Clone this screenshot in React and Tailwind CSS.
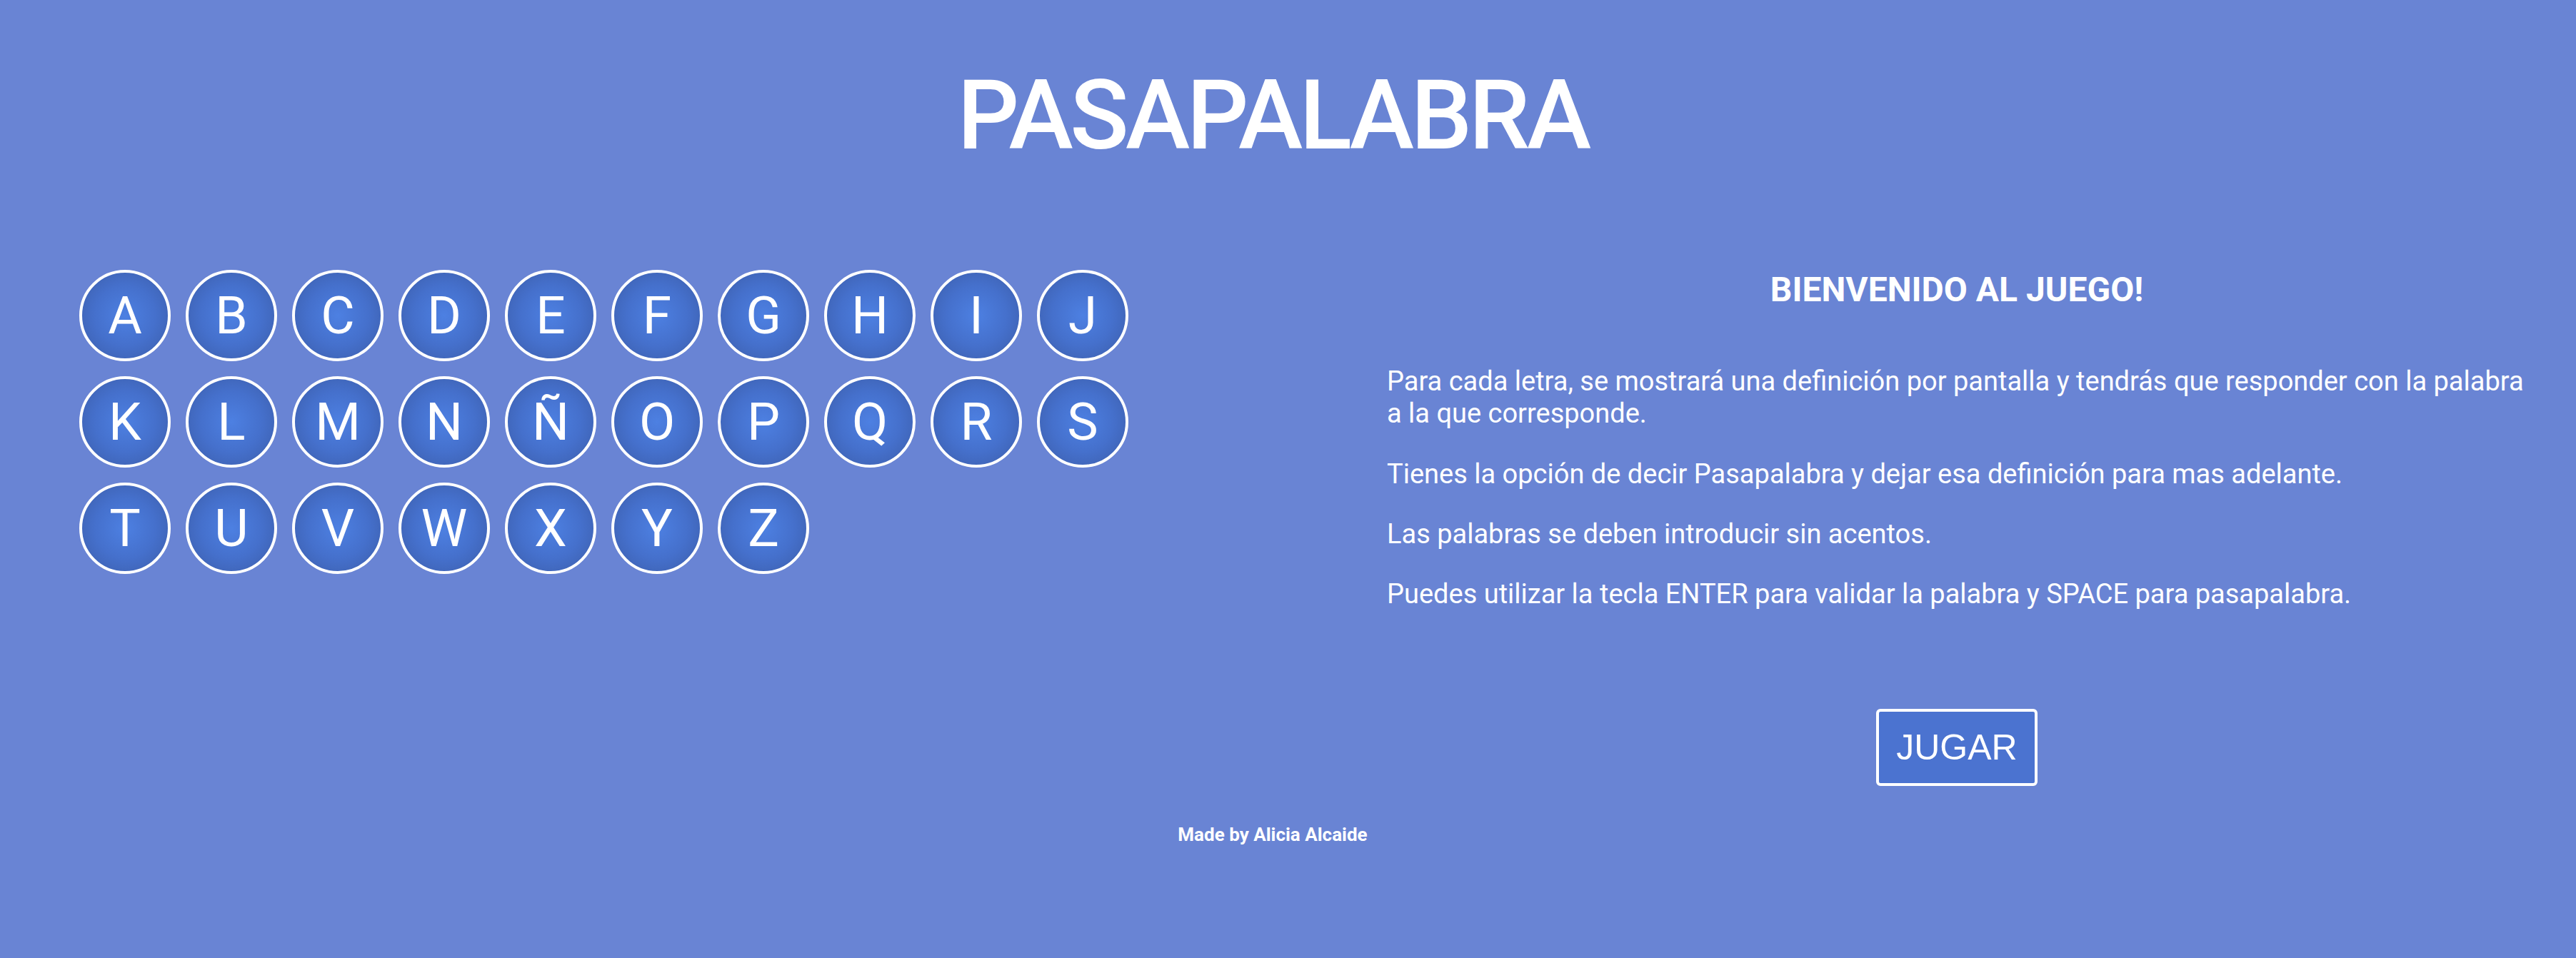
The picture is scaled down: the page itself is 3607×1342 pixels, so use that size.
import React from "react";

const rows = [
  ["A", "B", "C", "D", "E", "F", "G", "H", "I", "J"],
  ["K", "L", "M", "N", "Ñ", "O", "P", "Q", "R", "S"],
  ["T", "U", "V", "W", "X", "Y", "Z"],
];
const letters = rows.flat();

function Circle({ l }) {
  return (
    <div className="flex h-[128px] w-[128px] items-center justify-center rounded-full border-[4px] border-white bg-[radial-gradient(circle,#4d80e2_0%,#4570cc_50%,#3b5ca8_100%)] text-[73px] leading-none text-white">
      {l}
    </div>
  );
}

export default function App() {
  return (
    <div className="min-h-[1342px] w-full bg-[#6984d4] font-['Roboto',sans-serif] text-white">
      <div className="w-[3564px]">
        <h1 className="pt-[94px] text-center text-[136px] font-medium leading-none tracking-[-4.5px]">
          PASAPALABRA
        </h1>
        <div className="mt-[148px] flex">
          <div className="w-[1782px] pl-[111px]">
            <div className="flex w-[1480px] flex-wrap gap-[21px]">
              {letters.map((l) => (
                <Circle key={l} l={l} />
              ))}
            </div>
          </div>
          <div className="ml-[160px] w-[1596px]">
            <h3 className="mt-[4px] text-center text-[48px] font-bold leading-none">
              BIENVENIDO AL JUEGO!
            </h3>
            <div className="mt-[82px] text-[38px] leading-[45px]">
              <p>
                Para cada letra, se mostrará una definición por pantalla y tendrás que responder con la palabra a la que corresponde.
              </p>
              <p className="mt-[40px]">
                Tienes la opción de decir Pasapalabra y dejar esa definición para mas adelante.
              </p>
              <p className="mt-[39px]">Las palabras se deben introducir sin acentos.</p>
              <p className="mt-[39px]">
                Puedes utilizar la tecla ENTER para validar la palabra y SPACE para pasapalabra.
              </p>
            </div>
            <div className="mt-[138px] flex justify-center">
              <button className="flex h-[108px] w-[226px] items-center justify-center rounded-[6px] border-[4px] border-white bg-[#4b73d0] font-['Liberation_Sans',Arial,sans-serif] text-[50px] leading-none text-white">
                JUGAR
              </button>
            </div>
          </div>
        </div>
        <p className="mt-[55px] text-center text-[26px] font-bold leading-none">
          Made by Alicia Alcaide
        </p>
      </div>
    </div>
  );
}
